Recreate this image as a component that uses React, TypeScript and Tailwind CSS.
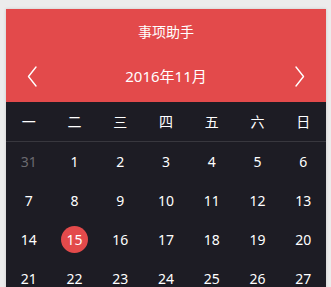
import React from "react";

const weekdays = ["一", "二", "三", "四", "五", "六", "日"];

type Day = { n: number; muted?: boolean; today?: boolean };

function buildDays(): Day[] {
  const days: Day[] = [{ n: 31, muted: true }];
  for (let i = 1; i <= 30; i++) days.push({ n: i, today: i === 15 });
  for (let i = 1; i <= 4; i++) days.push({ n: i, muted: true });
  return days;
}

function Chevron({ dir }: { dir: "left" | "right" }) {
  return (
    <svg width="10" height="21" viewBox="0 0 10 21" fill="none">
      <path
        d={dir === "left" ? "M9 1 L1.5 10.5 L9 20" : "M1 1 L8.5 10.5 L1 20"}
        stroke="#fff"
        strokeWidth="1.4"
        strokeLinecap="round"
        strokeLinejoin="round"
      />
    </svg>
  );
}

export default function App() {
  const days = buildDays();
  return (
    <div className="h-[287px] overflow-hidden bg-[#ececec] pl-[6px] pr-[5px] pt-[9px] font-['Noto_Sans','Noto_Sans_CJK_SC',sans-serif]">
      <div className="w-[320px] shadow-[0_0_3px_rgba(0,0,0,0.15)]">
        {/* Header */}
        <div className="bg-[#e34a4b] text-white">
          <div className="flex h-[44px] items-center justify-center text-[14px]">事项助手</div>
          <div className="flex h-[49px] items-center justify-between px-[21px] pb-[3px]">
            <Chevron dir="left" />
            <span className="text-[15px]">2016年11月</span>
            <Chevron dir="right" />
          </div>
        </div>

        {/* Body */}
        <div className="bg-[#1d1c24] text-white">
          <div className="grid h-[40px] grid-cols-7 items-center border-b border-[#38373e] text-[14px]">
            {weekdays.map((w) => (
              <div key={w} className="text-center">
                {w}
              </div>
            ))}
          </div>
          <div className="grid grid-cols-7">
            {days.map((d, i) => (
              <div key={i} className="flex h-[39px] items-center justify-center text-[14px]">
                {d.today ? (
                  <span className="flex h-[27px] w-[27px] items-center justify-center rounded-full bg-[#e34a4b]">
                    {d.n}
                  </span>
                ) : (
                  <span className={d.muted ? "text-[#6b6a70]" : ""}>{d.n}</span>
                )}
              </div>
            ))}
          </div>
        </div>
      </div>
    </div>
  );
}
